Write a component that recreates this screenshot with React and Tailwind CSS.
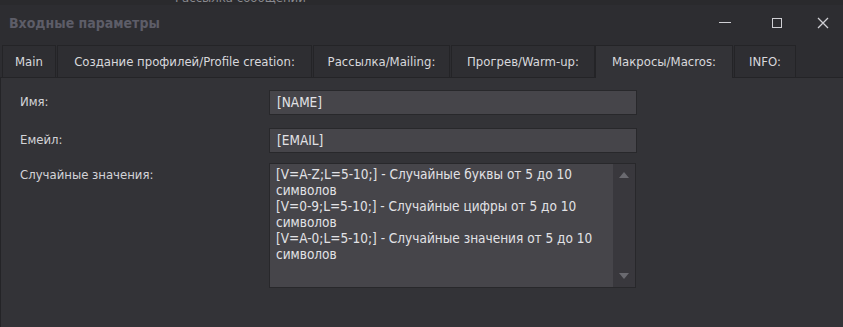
import React from "react";

const tabs = [
  { label: "Main", w: "w-[54px]" },
  { label: "Создание профилей/Profile creation:", w: "w-[255px]" },
  { label: "Рассылка/Mailing:", w: "w-[137px]" },
  { label: "Прогрев/Warm-up:", w: "w-[144px]" },
  { label: "Макросы/Macros:", w: "w-[138px]", active: true },
  { label: "INFO:", w: "w-[62px]" },
];

const lines = [
  "[V=A-Z;L=5-10;] - Случайные буквы от 5 до 10",
  "символов",
  "[V=0-9;L=5-10;] - Случайные цифры от 5 до 10",
  "символов",
  "[V=A-0;L=5-10;] - Случайные значения от 5 до 10",
  "символов",
];

function App() {
  return (
    <div
      className="w-[843px] h-[327px] bg-[#333337] text-[13px] text-[#d4d4d8] overflow-hidden flex flex-col"
      style={{ fontFamily: '"DejaVu Sans Condensed", "Liberation Sans", sans-serif' }}
    >
      {/* title bar */}
      <div className="h-[45px] bg-[#2d2d31] flex items-center relative">
        <div className="absolute top-0 left-0 w-full h-[5px] bg-[#2a2a2d] overflow-hidden">
          <span className="absolute top-[-12px] left-[175px] text-[#8a8a90] text-[13px] whitespace-nowrap">Рассылка сообщений</span>
        </div>
        <span className="pl-[9px] font-bold text-[#5d5d68] text-[14px] mt-[1px]">Входные параметры</span>
        <div className="ml-auto flex items-center h-full">
          <div className="w-[52px] flex justify-center">
            <div className="w-[12px] h-[1px] bg-[#cfcfd4]" />
          </div>
          <div className="w-[52px] flex justify-center">
            <div className="w-[10px] h-[10px] border border-[#cfcfd4]" />
          </div>
          <div className="w-[40px] flex justify-center">
            <svg width="12" height="12" viewBox="0 0 12 12">
              <path d="M1 1L11 11M11 1L1 11" stroke="#cfcfd4" strokeWidth="1.3" />
            </svg>
          </div>
        </div>
      </div>

      {/* tabs */}
      <div className="h-[33px] flex items-end pl-[1px] bg-[#2d2d31] border-b border-[#242427]">
        {tabs.map((t) =>
          t.active ? (
            <div
              key={t.label}
              className={`${t.w} h-[33px] mb-[-1px] flex items-center justify-center bg-[#333337] border border-b-0 border-[#242427] text-[#d8d8dc]`}
            >
              {t.label}
            </div>
          ) : (
            <div
              key={t.label}
              className={`${t.w} h-[32px] flex items-center justify-center bg-[#2e2e32] border border-b-0 border-[#242427] ml-[1px] text-[#d8d8dc]`}
            >
              {t.label}
            </div>
          )
        )}
      </div>

      {/* content */}
      <div className="flex-1 border-l border-[#242427] pt-[11px]">
        <div className="flex items-center h-[26px]">
          <span className="w-[268px] pl-[19px]">Имя:</span>
          <div className="w-[368px] h-[25px] bg-[#46454a] border border-[#28282b] flex items-center pl-[7px] text-[#e2e2e6] text-[13.5px]">
            [NAME]
          </div>
        </div>
        <div className="flex items-center h-[26px] mt-[12px]">
          <span className="w-[268px] pl-[19px]">Емейл:</span>
          <div className="w-[368px] h-[25px] bg-[#46454a] border border-[#28282b] flex items-center pl-[7px] text-[#e2e2e6] text-[13.5px]">
            [EMAIL]
          </div>
        </div>
        <div className="flex items-start mt-[10px]">
          <span className="w-[268px] pl-[19px] pt-[2px]">Случайные значения:</span>
          <div className="w-[367px] h-[125px] bg-[#46454a] border border-[#28282b] flex">
            <div className="flex-1 pl-[6px] pt-[2px] leading-[16px] text-[#e2e2e6] text-[13.5px]">
              {lines.map((l, i) => (
                <div key={i}>{l}</div>
              ))}
            </div>
            <div className="w-[22px] bg-[#39383d] flex flex-col items-center justify-between py-[8px]">
              <svg width="10" height="6" viewBox="0 0 10 6">
                <path d="M5 0L10 6H0Z" fill="#6a6a70" />
              </svg>
              <svg width="10" height="6" viewBox="0 0 10 6">
                <path d="M0 0H10L5 6Z" fill="#6a6a70" />
              </svg>
            </div>
          </div>
        </div>
      </div>
    </div>
  );
}

export default App;
